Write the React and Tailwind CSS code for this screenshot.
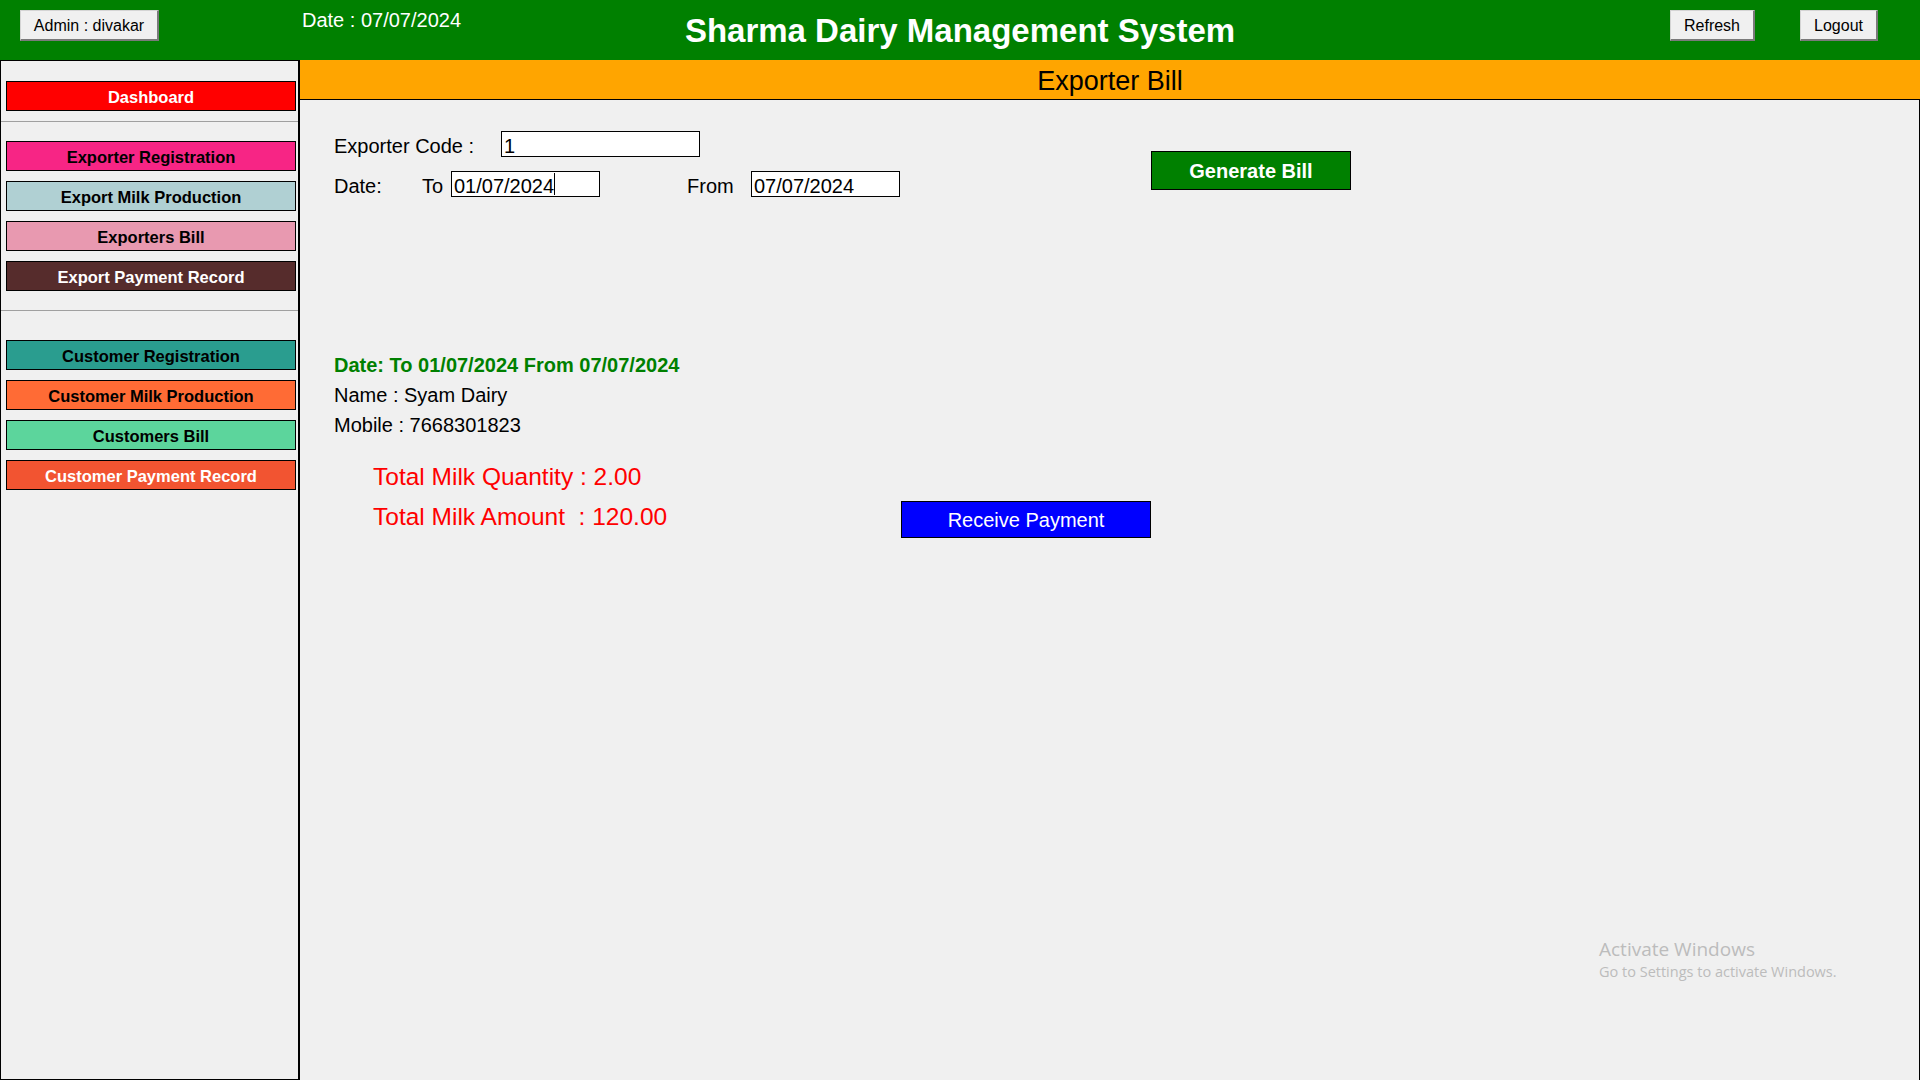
import React from "react";

const font = { fontFamily: '"Liberation Sans", Arial, sans-serif' };

const exporterLinks = [
  { label: "Exporter Registration", cls: "bg-[#f72585] text-black" },
  { label: "Export Milk Production", cls: "bg-[#b0d0d3] text-black" },
  { label: "Exporters Bill", cls: "bg-[#e899b0] text-black" },
  { label: "Export Payment Record", cls: "bg-[#562c2c] text-white" },
];

const customerLinks = [
  { label: "Customer Registration", cls: "bg-[#2a9d8f] text-black" },
  { label: "Customer Milk Production", cls: "bg-[#ff6b35] text-black" },
  { label: "Customers Bill", cls: "bg-[#5cd59c] text-black" },
  { label: "Customer Payment Record", cls: "bg-[#f25431] text-white" },
];

const WinButton = ({ children, width }) => (
  <button
    className={`${width} h-[31px] pt-[2px] bg-[#f0f0f0] border border-[#d4d4d4] border-r-[#7a7a7a] border-b-[#7a7a7a] border-r-2 border-b-2 text-[16px] text-black leading-none`}
  >
    {children}
  </button>
);

const SideButton = ({ label, cls }) => (
  <button
    className={`w-full h-[30px] pt-[2px] border border-black font-bold text-[16.5px] leading-none ${cls}`}
  >
    {label}
  </button>
);

const Field = ({ value, width, caret }) => (
  <div
    className={`${width} h-[26px] bg-white border border-black flex items-center pl-[2px] pt-[3px] text-[20px] leading-none text-black`}
  >
    <span>{value}</span>
    {caret && <span className="w-[1px] h-[22px] -mt-[3px] bg-black" />}
  </div>
);

const App = () => {
  return (
    <div className="w-[1920px] h-[1080px] bg-[#f0f0f0] relative overflow-hidden" style={font}>
      {/* HEADER */}
      <div className="h-[60px] bg-[#008000] grid grid-cols-[1fr_auto_1fr]">
        <div className="flex items-start pl-[20px] pt-[10px]">
          <WinButton width="w-[139px]">Admin : divakar</WinButton>
          <span className="ml-[143px] -mt-[1px] text-white text-[20px] leading-[23px]">
            Date : 07/07/2024
          </span>
        </div>
        <h1 className="pt-[12px] text-white font-bold text-[33px] leading-[37px]">
          Sharma Dairy Management System
        </h1>
        <div className="flex items-start justify-end gap-[45px] pt-[10px] pr-[42px]">
          <WinButton width="w-[85px]">Refresh</WinButton>
          <WinButton width="w-[78px]">Logout</WinButton>
        </div>
      </div>

      <div className="flex h-[1020px]">
        {/* SIDEBAR */}
        <div className="w-[300px] h-full border-t border-l border-b border-black border-r-2 pt-[20px] pl-[5px] pr-[2px] flex flex-col">
          <SideButton label="Dashboard" cls="bg-[#ff0000] text-white" />
          <div className="-ml-[5px] -mr-[2px] mt-[10px] h-[1px] bg-[#a0a0a0]" />
          <div className="mt-[19px] flex flex-col gap-[10px]">
            {exporterLinks.map((l) => (
              <SideButton key={l.label} {...l} />
            ))}
          </div>
          <div className="-ml-[5px] -mr-[2px] mt-[19px] h-[1px] bg-[#a0a0a0]" />
          <div className="mt-[29px] flex flex-col gap-[10px]">
            {customerLinks.map((l) => (
              <SideButton key={l.label} {...l} />
            ))}
          </div>
        </div>

        {/* MAIN */}
        <div className="flex-1 flex flex-col">
          <div className="h-[39px] pt-[3px] bg-[#ffa500] flex items-center justify-center text-black text-[27px] leading-none">
            Exporter Bill
          </div>
          <div className="flex-1 border-t border-r border-black pl-[34px] pt-[31px]">
            {/* FORM */}
            <div className="flex items-start">
              <div className="flex flex-col">
                <div className="flex items-center h-[26px] text-[20px] text-black">
                  <span className="w-[167px] pt-[4px]">Exporter Code :</span>
                  <Field value="1" width="w-[199px]" />
                </div>
                <div className="flex items-center h-[26px] mt-[14px] text-[20px] text-black">
                  <span className="w-[88px] pt-[3px]">Date:</span>
                  <span className="w-[29px] pt-[3px]">To</span>
                  <Field value="01/07/2024" width="w-[149px]" caret />
                  <span className="ml-[87px] w-[64px] pt-[3px]">From</span>
                  <Field value="07/07/2024" width="w-[149px]" />
                </div>
              </div>
              <button className="ml-[251px] mt-[20px] w-[200px] h-[39px] bg-[#008000] border border-black text-white font-bold text-[20px] leading-none">
                Generate Bill
              </button>
            </div>

            {/* RESULT */}
            <div className="mt-[153px] text-[20px] leading-[30px] text-black">
              <div className="font-bold text-[#008000]">Date: To 01/07/2024 From 07/07/2024</div>
              <div>Name : Syam Dairy</div>
              <div>Mobile : 7668301823</div>
            </div>

            <div className="flex items-start mt-[17px] pl-[39px]">
              <div className="w-[528px] text-[24.5px] leading-[40px] text-[#ff0000] whitespace-pre">
                <div>Total Milk Quantity : 2.00</div>
                <div>Total Milk Amount  : 120.00</div>
              </div>
              <button className="mt-[44px] w-[250px] h-[37px] bg-[#0000ff] border border-black text-white text-[20px] leading-none">
                Receive Payment
              </button>
            </div>
          </div>
        </div>
      </div>

      {/* WATERMARK */}
      <div
        className="absolute left-[1599px] top-[937px] text-[#bcbcbc] pointer-events-none"
        style={{ fontFamily: '"Open Sans", "Noto Sans", sans-serif' }}
      >
        <div className="text-[19px] leading-[25px]">Activate Windows</div>
        <div className="text-[14.5px] leading-[20px]">Go to Settings to activate Windows.</div>
      </div>
    </div>
  );
};

export default App;
